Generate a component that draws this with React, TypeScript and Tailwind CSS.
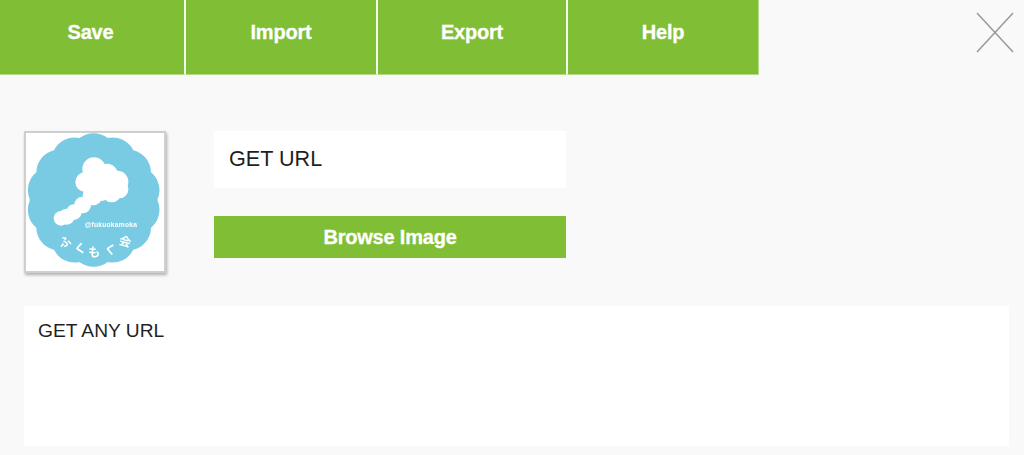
import React from 'react';

const NAV_ITEMS = [
  { label: 'Save', width: 'w-[186px]', nudge: 'pr-[3px]' },
  { label: 'Import', width: 'w-[192px]', nudge: '' },
  { label: 'Export', width: 'w-[190px]', nudge: '' },
  { label: 'Help', width: 'w-[191px]', nudge: '' },
];

// wavy badge outline, built from equal arcs round a circle
const scallopPath = (cx: number, cy: number, r: number, bumps: number, arc: number) => {
  let d = '';
  for (let i = 0; i <= bumps; i++) {
    const a = (i / bumps) * Math.PI * 2 - Math.PI / 2 + Math.PI / bumps;
    const x = (cx + r * Math.cos(a)).toFixed(1);
    const y = (cy + r * Math.sin(a)).toFixed(1);
    d += i === 0 ? `M${x} ${y}` : ` A${arc} ${arc} 0 0 1 ${x} ${y}`;
  }
  return d + 'Z';
};

const CLOUD: [number, number, number][] = [
  [252, 147, 35], [226, 186, 30], [290, 165, 34], [322, 185, 33], [328, 208, 27],
  [270, 197, 46], [305, 218, 29], [295, 182, 37], [248, 226, 30], [218, 255, 25],
  [192, 276, 23], [170, 290, 24], [153, 295, 22],
];

const HIRAGANA: [string, number, number, number][] = [
  ['ふ', 147, 378, -15],
  ['く', 192, 398, -8],
  ['も', 235, 412, 0],
  ['く', 284, 402, 8],
  ['会', 328, 378, 15],
];

const Logo = () => (
  <div className="w-[142px] h-[142px] shrink-0 bg-white border-2 border-[#cfcfcf] shadow-[1px_2px_3px_rgba(0,0,0,0.3)]">
    <svg viewBox="48 39 414 414" className="w-[138px] h-[138px] blur-[0.5px]">
      <path d={scallopPath(251, 240, 191, 14, 70)} fill="#79cbe4" />
      <g fill="#ffffff">
        {CLOUD.map(([cx, cy, r], i) => (
          <circle key={i} cx={cx} cy={cy} r={r} />
        ))}
      </g>
      <text x="224" y="320" fill="#ffffff" fontSize="20" fontWeight="700" letterSpacing="0.8" fontFamily="'Liberation Sans', sans-serif">
        @fukuokamoka
      </text>
      <g fill="#ffffff" fontSize="36" fontWeight="700" fontFamily="'Noto Sans CJK JP', sans-serif">
        {HIRAGANA.map(([ch, x, y, rot], i) => (
          <text key={i} x={x} y={y} transform={`rotate(${rot} ${x + 18} ${y - 14})`}>
            {ch}
          </text>
        ))}
      </g>
    </svg>
  </div>
);

export default function App() {
  return (
    <div className="w-[1024px] h-[455px] overflow-hidden bg-[#f9f9f9] font-['Liberation_Sans',Arial,sans-serif]">
      <div className="flex justify-between h-[75px]">
        <div className="flex">
          {NAV_ITEMS.map((item) => (
            <div
              key={item.label}
              className={`${item.width} ${item.nudge} h-[75px] flex items-center justify-center pb-[10px] bg-[#80bf35] border-r-2 border-r-[#f1f8e8] border-b border-b-[#b4d98a] text-white text-[20px] font-bold tracking-[-0.2px] last:border-r last:border-r-[#b4d98a] [-webkit-text-stroke:0.3px_#ffffff]`}
            >
              {item.label}
            </div>
          ))}
        </div>
        <svg width="38" height="41" viewBox="0 0 38 41" className="mt-[12px] mr-[10px]">
          <path d="M1 1L37 40M37 1L1 40" stroke="#999999" strokeWidth="1.5" fill="none" />
        </svg>
      </div>

      <div className="flex gap-[48px] pl-[24px] pt-[56px]">
        <Logo />
        <div className="w-[352px] flex flex-col gap-[28px]">
          <div className="h-[57px] bg-white flex items-center pl-[15px] text-[21.6px] text-[#1f1f1f]">GET URL</div>
          <div className="h-[42px] bg-[#80bf35] flex items-center justify-center text-white text-[20px] font-bold tracking-[-0.2px] [-webkit-text-stroke:0.3px_#ffffff]">
            Browse Image
          </div>
        </div>
      </div>

      <div className="w-[985px] h-[140px] ml-[24px] mt-[33px] bg-white pl-[14px] pt-[13px] text-[19.2px] leading-[24px] text-[#1f1f1f]">
        GET ANY URL
      </div>
    </div>
  );
}
